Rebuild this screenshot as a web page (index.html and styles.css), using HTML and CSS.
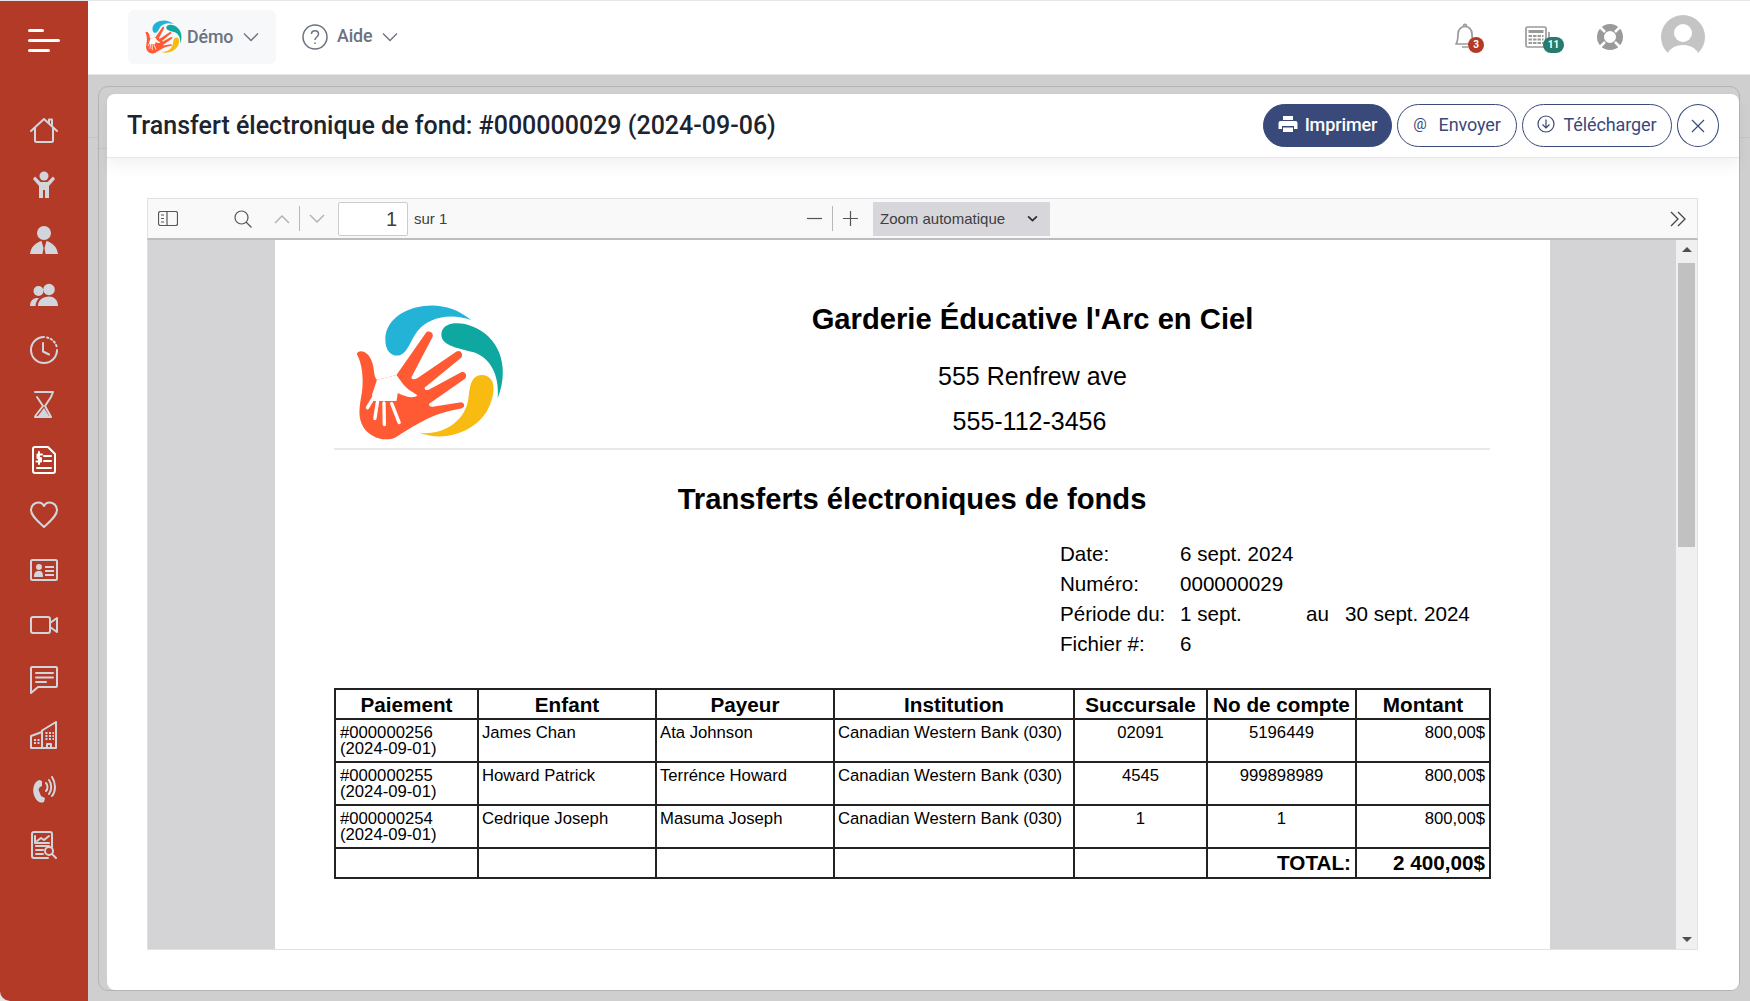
FILE: index.html
```html
<!DOCTYPE html>
<html lang="fr">
<head>
<meta charset="utf-8">
<title>Transfert électronique de fond</title>
<link rel="stylesheet" href="styles.css">
</head>
<body>
<svg class="defs" width="0" height="0" aria-hidden="true">
  <defs>
    <symbol id="logo" viewBox="105 75 445 405">
      <path fill="#23b3d6" d="M450 122C400 80 340 70 285 85C230 100 195 135 195 180C195 215 215 232 238 226C262 218 268 185 290 155C325 112 390 100 450 122Z"/>
      <path fill="#0fa8a0" d="M528 355C552 295 552 220 500 170C470 142 430 128 395 132C370 136 358 152 362 172C368 198 410 205 455 217C505 232 535 285 528 355Z"/>
      <path fill="#f8bb12" d="M295 456C365 482 450 462 495 395C515 360 522 320 510 300C498 282 470 278 455 298C442 318 445 345 438 372C420 430 360 465 295 456Z"/>
      <path fill="#ff5a33" d="M110 222C118 208 142 214 153 240C165 268 158 285 170 300L228 285L315 160C322 150 340 158 335 172L272 292C275 300 285 298 292 293L405 216C418 208 430 225 418 235L312 322C310 332 320 330 325 328L420 277C435 272 440 292 428 298L325 370C322 380 335 380 340 378L420 366C432 368 432 382 420 384C390 390 340 400 300 425C270 440 245 458 225 470C190 485 150 470 130 440C112 410 118 380 125 340C132 290 125 250 110 222Z"/>
      <path fill="#fff" d="M170 300L228 285L248 312C262 330 280 336 290 345C280 356 255 350 232 338L228 362L160 362L155 345Z"/>
      <path fill="none" stroke="#fff" stroke-width="10" stroke-linecap="round" d="M158 355L142 382M172 362L164 414M191 368L192 432M214 370L236 426"/>
    </symbol>
  </defs>
</svg>

<div class="app">
  <nav class="sidebar">
    <div class="burger"><span class="bar bar-s"></span><span class="bar bar-l"></span><span class="bar bar-m"></span></div>
    <ul class="menu">
      <li><svg class="ico" viewBox="0 0 28 28"><path class="ln" d="M1 15L14 3L27 15M5 12V24.500Q5 26 6.500 26H21.500Q23 26 23 24.500V12M19 7V3.500H22V10"/></svg></li>
      <li><svg class="ico" viewBox="0 0 28 28"><circle class="fl" cx="14" cy="5" r="4.500"/><path class="fl" d="M3 8L5 5.500L10.500 11H17.500L23 5.500L25 8L19 15V27H15V19H13V27H9V15Z"/></svg></li>
      <li><svg class="ico" viewBox="0 0 28 28"><circle class="fl" cx="14" cy="7" r="7"/><path class="fl" d="M0 28C1 21 5 17 11.500 15L13.500 22L12.500 28ZM28 28C27 21 23 17 16.500 15L14.500 22L15.500 28Z"/></svg></li>
      <li><svg class="ico" viewBox="0 0 28 28"><circle class="fl" cx="8.500" cy="10" r="5"/><circle class="fl" cx="19" cy="8.500" r="5.800"/><path class="fl" d="M0 25C0 19 4 16.500 9 17C7 19 5.500 22 5.500 25ZM8 25C8 19 13 15.500 19 15.500C25 15.500 28 20 28 25Z"/></svg></li>
      <li><svg class="ico" viewBox="0 0 28 28"><path class="ln" d="M14 1A13 13 0 1 0 27 14"/><path class="ln" stroke-dasharray="1.500 2.500" d="M17 1.500A13 13 0 0 1 27 12"/><path class="ln" d="M13 7V15.500L19 18.500"/></svg></li>
      <li><svg class="ico" viewBox="0 0 28 28"><path class="ln" d="M5 1H23L21 6L15 15L21 26H5L6 24L13 15L7 6"/><path class="fl" d="M8 25L14 17L19 25Z"/></svg></li>
      <li class="active"><svg class="ico" viewBox="0 0 28 28"><path class="ln" d="M5 1H18L25 8V25Q25 27 23 27H5Q3 27 3 25V3Q3 1 5 1Z"/><path class="ln" d="M14 10H21M14 15H21M7 22H21M9 6V18"/><path class="ln" d="M12 8.500H7.500V12H11V15.500H6.500"/></svg></li>
      <li><svg class="ico" viewBox="0 0 28 28"><path class="ln" d="M14 26C8 20 1 15 1 9C1 4 5 1.500 8.500 1.500C11 1.500 13 3 14 5C15 3 17 1.500 19.500 1.500C23 1.500 27 4 27 9C27 15 20 20 14 26Z"/></svg></li>
      <li><svg class="ico" viewBox="0 0 28 28"><rect class="ln" x="1" y="4" width="26" height="20" rx="1.500"/><circle class="fl" cx="9" cy="11" r="3"/><path class="fl" d="M4 21C4 16 6 15 9 15C12 15 13 16 13 21ZM15 10H24V12H15ZM15 14H24V16H15ZM15 18H24V20H15Z"/></svg></li>
      <li><svg class="ico" viewBox="0 0 28 28"><rect class="ln" x="1" y="6" width="19" height="16" rx="2"/><path class="ln" d="M20 12L27 7V21L20 16"/></svg></li>
      <li><svg class="ico" viewBox="0 0 28 28"><path class="ln" d="M2 1H26Q27 1 27 2V20Q27 21 26 21H8L1 27V2Q1 1 2 1Z"/><path class="ln" d="M6 7H23M6 11.500H23M6 16H16"/></svg></li>
      <li><svg class="ico" viewBox="0 0 28 28"><path class="ln" d="M12 27V9.500L26 1V27H1V15L12 11M17 27V23H21V27"/><path class="dots" d="M15.500 12H24M15.500 15H24M15.500 18H24M4 19H10M4 22H10"/></svg></li>
      <li><svg class="ico" viewBox="0 0 28 28"><path class="fl" d="M9 4L12 5L12 10C9 11 8 13 9 15L11 20L15 22L14 26C10 28 6 25 4 19C2 13 4 6 9 4Z"/><path class="ln" d="M16 7C18 9 18 13 16 15M19 4C22 8 22 14 19 18M22 1C26 7 26 15 22 20"/></svg></li>
      <li><svg class="ico" viewBox="0 0 28 28"><path class="ln" d="M22 16V3Q22 1 20 1H4Q2 1 2 3V25Q2 27 4 27H18"/><path class="ln" d="M5 5V12H19M7 10L11 7L14 9L19 5M6 15H19M6 19H13M6 23H13"/><circle class="ln" cx="19" cy="20" r="4"/><path class="ln" d="M22 23L26 27"/></svg></li>
    </ul>
  </nav>

  <div class="main">
    <header class="topbar">
      <div class="brand">
        <svg class="brand-logo" viewBox="0 0 37 34"><use href="#logo"/></svg>
        <span class="top-label">Démo</span>
        <svg class="caret" viewBox="0 0 16 10"><path d="M1 1.500L8 8.500L15 1.500"/></svg>
      </div>
      <div class="help">
        <svg class="help-ico" viewBox="0 0 26 26"><circle cx="13" cy="13" r="12"/><path d="M9.500 10C9.500 5.500 16.500 5.500 16.500 10C16.500 13 13 13 13 16"/><path d="M13 18.500V20"/></svg>
        <span class="top-label">Aide</span>
        <svg class="caret" viewBox="0 0 16 10"><path d="M1 1.500L8 8.500L15 1.500"/></svg>
      </div>
      <div class="top-icons">
        <div class="ti ti-bell">
          <svg viewBox="0 0 22 26"><path class="tln" d="M2 21C4 18 4 15 4 11C4 6.500 7 3.500 11 3.500C15 3.500 18 6.500 18 11C18 15 18 18 20 21ZM9.500 3.500C9.500 0.500 12.500 0.500 12.500 3.500M8 24H14"/></svg>
          <span class="badge badge-red">3</span>
        </div>
        <div class="ti ti-cal">
          <svg viewBox="0 0 26 22"><rect class="tln" x="1" y="1" width="20" height="20" rx="1.500"/><path class="tfl" d="M3.500 4H18.500V7H3.500Z"/><path class="tdots" d="M3.500 10H18.500M3.500 13.500H18.500M3.500 17H18.500"/><path class="tln" d="M24 6V18"/></svg>
          <span class="badge badge-green">11</span>
        </div>
        <div class="ti ti-ring">
          <svg viewBox="0 0 26 26"><circle cx="13" cy="13" r="9.500" class="ring-a"/><path class="ring-b" d="M8 8L3 3M18 8L23 3M8 18L3 23M18 18L23 23"/></svg>
        </div>
        <div class="avatar">
          <svg viewBox="0 0 44 44"><circle cx="22" cy="22" r="22" fill="#c4c4c4"/><circle cx="22" cy="18" r="9" fill="#fff"/><path fill="#fff" d="M5 44C6 35 13 30 22 30C31 30 38 35 39 44Z"/></svg>
        </div>
      </div>
    </header>

    <main class="content">
      <div class="outer">
        <section class="card">
          <div class="card-head">
            <h1 class="card-title">Transfert électronique de fond: #000000029 (2024-09-06)</h1>
            <div class="actions">
              <button class="btn btn-fill"><svg class="bi" viewBox="0 0 20 18"><path fill="#fff" d="M5 1H15V5H5ZM2.500 6H17.500Q19.500 6 19.500 8V14H16V11H4V14H0.500V8Q0.500 6 2.500 6ZM5 12.500H15V17H5Z"/></svg>Imprimer</button>
              <button class="btn btn-line"><span class="at">@</span>Envoyer</button>
              <button class="btn btn-line btn-dl"><svg class="bi bi-dl" viewBox="0 0 18 18"><circle cx="9" cy="9" r="8"/><path d="M9 4.500V13M5.500 9.500L9 13L12.500 9.500"/></svg>Télécharger</button>
              <button class="btn-close"><svg viewBox="0 0 16 16"><path d="M2 2L14 14M14 2L2 14"/></svg></button>
            </div>
          </div>

          <div class="card-body">
            <div class="pdf-toolbar">
              <svg class="tb-ico tb-side" viewBox="0 0 20 15"><rect x="0.500" y="0.500" width="19" height="14" rx="2"/><path d="M9 0.500V14.500M3 4H6M3 7.500H6M3 11H6"/></svg>
              <svg class="tb-ico tb-search" viewBox="0 0 18 18"><circle cx="7.500" cy="7.500" r="6.500"/><path d="M12 12L17.500 17.500"/></svg>
              <svg class="tb-ico tb-chev tb-up" viewBox="0 0 16 10"><path d="M1 9L8 2L15 9"/></svg>
              <span class="tb-div"></span>
              <svg class="tb-ico tb-chev tb-down" viewBox="0 0 16 10"><path d="M1 1L8 8L15 1"/></svg>
              <span class="page-input">1</span>
              <span class="page-of">sur 1</span>
              <svg class="tb-ico tb-minus" viewBox="0 0 15 15"><path d="M0 7.500H15"/></svg>
              <span class="tb-div tb-div2"></span>
              <svg class="tb-ico tb-plus" viewBox="0 0 15 15"><path d="M0 7.500H15M7.500 0V15"/></svg>
              <div class="zoom-select"><span>Zoom automatique</span><svg viewBox="0 0 10 6"><path d="M1 1L5 5L9 1"/></svg></div>
              <svg class="tb-ico tb-more" viewBox="0 0 16 16"><path d="M1 1L8 8L1 15M8 1L15 8L8 15"/></svg>
            </div>

            <div class="viewer">
              <div class="pages">
                <article class="page">
                  <div class="letterhead">
                    <svg class="doc-logo" viewBox="0 0 150 137"><use href="#logo"/></svg>
                    <div class="org">
                      <div class="org-name">Garderie Éducative l'Arc en Ciel</div>
                      <div class="org-line">555 Renfrew ave</div>
                      <div class="org-line org-tel">555-112-3456</div>
                    </div>
                  </div>
                  <div class="rule"></div>
                  <h2 class="doc-title">Transferts électroniques de fonds</h2>
                  <div class="info">
                    <span>Date:</span><span class="wide">6 sept. 2024</span>
                    <span>Numéro:</span><span class="wide">000000029</span>
                    <span>Période du:</span><span>1 sept.</span><span>au</span><span>30 sept. 2024</span>
                    <span>Fichier #:</span><span class="wide">6</span>
                  </div>
                  <table class="tx">
                    <colgroup><col class="c1"><col class="c2"><col class="c3"><col class="c4"><col class="c5"><col class="c6"><col class="c7"></colgroup>
                    <thead>
                      <tr><th>Paiement</th><th>Enfant</th><th>Payeur</th><th>Institution</th><th>Succursale</th><th>No de compte</th><th>Montant</th></tr>
                    </thead>
                    <tbody>
                      <tr class="r43"><td>#000000256<br>(2024-09-01)</td><td>James Chan</td><td>Ata Johnson</td><td>Canadian Western Bank (030)</td><td class="ctr">02091</td><td class="ctr">5196449</td><td class="rgt">800,00$</td></tr>
                      <tr class="r43"><td>#000000255<br>(2024-09-01)</td><td>Howard Patrick</td><td>Terrénce Howard</td><td>Canadian Western Bank (030)</td><td class="ctr">4545</td><td class="ctr">999898989</td><td class="rgt">800,00$</td></tr>
                      <tr class="r43"><td>#000000254<br>(2024-09-01)</td><td>Cedrique Joseph</td><td>Masuma Joseph</td><td>Canadian Western Bank (030)</td><td class="ctr">1</td><td class="ctr">1</td><td class="rgt">800,00$</td></tr>
                      <tr class="total"><td></td><td></td><td></td><td></td><td></td><td class="rgt">TOTAL:</td><td class="rgt">2 400,00$</td></tr>
                    </tbody>
                  </table>
                </article>
              </div>
              <div class="scroll">
                <span class="arrow arrow-up"></span>
                <span class="thumb"></span>
                <span class="arrow arrow-down"></span>
              </div>
            </div>
          </div>
        </section>
      </div>
    </main>
  </div>
</div>
</body>
</html>
```

FILE: styles.css
```css
* { box-sizing: border-box; }
html, body { margin: 0; padding: 0; }
body {
  width: 1750px;
  height: 1001px;
  overflow: hidden;
  background: #e6e6e6;
  font-family: Roboto, "Liberation Sans", sans-serif;
}
.defs { display: block; height: 0; }
.app { display: flex; height: 1000px; margin-top: 1px; }

/* Sidebar */
.sidebar {
  width: 88px;
  flex: none;
  background: #b33a26;
  border-bottom-left-radius: 10px;
  color: #d2d5dc;
}
.burger { display: flex; flex-direction: column; gap: 7px; padding: 28px 0 0 28px; height: 101px; }
.bar { display: block; height: 3px; background: #fff; border-radius: 2px; }
.bar-s { width: 16px; }
.bar-l { width: 32px; }
.bar-m { width: 22px; }
.menu { list-style: none; margin: 0; padding: 0; }
.menu li { height: 55px; display: flex; align-items: center; justify-content: center; }
.menu .active { color: #fff; }
.ico { width: 28px; height: 28px; display: block; }
.ln { fill: none; stroke: currentColor; stroke-width: 2; stroke-linecap: round; stroke-linejoin: round; }
.fl { fill: currentColor; }
.dots { fill: none; stroke: currentColor; stroke-width: 2; stroke-dasharray: 2 1.500; }

/* Main */
.main { flex: 1; min-width: 0; display: flex; flex-direction: column; background: #cfcfcf; }
.topbar {
  height: 74px;
  flex: none;
  background: #fff;
  border-bottom: 1px solid #e6e6e6;
  display: flex;
  align-items: center;
  padding-left: 40px;
  color: #6b7280;
}
.brand {
  width: 148px;
  height: 54px;
  margin-top: -1px;
  background: #f7f8fa;
  border-radius: 6px;
  display: flex;
  align-items: center;
  padding-left: 17px;
}
.brand-logo { width: 37px; height: 34px; margin-right: 5px; }
.top-label { font-size: 17.800px; font-weight: 500; letter-spacing: -0.1px; margin-bottom: 2px; }
.caret { width: 16px; height: 10px; margin-left: 10px; fill: none; stroke: #6b7280; stroke-width: 1.300; }
.help { display: flex; align-items: center; margin-left: 26px; margin-top: -2px; }
.help-ico { width: 26px; height: 26px; margin-right: 9px; fill: none; stroke: #6b7280; stroke-width: 1.500; }
.top-icons { margin-left: auto; display: flex; align-items: center; padding-right: 45px; }
.ti { position: relative; display: flex; margin-top: -2px; }
.ti svg { display: block; }
.ti-bell { margin-top: -4px; }
.ti-bell svg { width: 22px; height: 26px; }
.ti-cal { margin-left: 49px; }
.ti-cal svg { width: 26px; height: 22px; }
.ti-ring { margin-left: 46px; }
.ti-ring svg { width: 26px; height: 26px; }
.tln { fill: none; stroke: #9a9a9a; stroke-width: 1.700; stroke-linejoin: round; }
.tfl { fill: #9a9a9a; }
.tdots { fill: none; stroke: #9a9a9a; stroke-width: 2; stroke-dasharray: 3.500 1; }
.ring-a { fill: none; stroke: #9a9a9a; stroke-width: 7; }
.ring-b { stroke: #fff; stroke-width: 2.500; }
.badge {
  position: absolute;
  height: 16px;
  border-radius: 8px;
  color: #fff;
  font-size: 10px;
  font-weight: 700;
  line-height: 16px;
  text-align: center;
}
.badge-red { background: #b33a26; width: 16px; left: 14px; top: 14px; }
.badge-green { background: #267a6e; width: 21px; left: 18px; top: 11px; }
.avatar { margin-left: 38px; width: 44px; height: 44px; margin-top: -1px; }
.avatar svg { display: block; width: 44px; height: 44px; }

/* Content */
.content {
  flex: 1;
  min-height: 0;
  padding: 11px 10px 10px 10px;
  background: linear-gradient(#c4c4c4, #c4c4c4) 0 62px / 100% 1px no-repeat #cfcfcf;
}
.outer {
  height: 100%;
  padding: 7px 0 0 8px;
  background: linear-gradient(#c4c4c4, #c4c4c4) 0 61px / 8px 1px no-repeat #cfcfcf;
  border: 1px solid #b4b4b4;
  border-radius: 10px;
}
.card {
  height: 100%;
  display: flex;
  flex-direction: column;
  background: #fff;
  border-radius: 8px;
}
.card-head {
  height: 64px;
  flex: none;
  display: flex;
  align-items: center;
  justify-content: space-between;
  padding: 0 20px 0 20px;
  border-bottom: 1px solid #e6e6e6;
  box-shadow: 0 8px 14px rgba(0, 0, 0, 0.05);
}
.card-title { margin: 0; font-size: 25px; line-height: 30px; font-weight: 500; color: #1c2430; }
.actions { display: flex; align-items: center; gap: 5px; }
.btn {
  height: 43px;
  border-radius: 22px;
  font-family: inherit;
  font-size: 18px;
  display: flex;
  align-items: center;
  justify-content: center;
  padding: 0 0 3px;
  letter-spacing: -0.1px;
}
.btn-fill { width: 129px; background: #38497a; border: 1px solid #38497a; color: #fff; font-weight: 500; }
.btn-line { width: 120px; background: #fff; border: 1px solid #38497a; color: #38497a; }
.btn-dl { width: 150px; }
.bi { width: 20px; height: 18px; margin-right: 7px; }
.bi-dl { width: 18px; height: 18px; margin-right: 8px; fill: none; stroke: #38497a; stroke-width: 1.200; }
.at { font-size: 15px; margin-right: 12px; }
.btn-close {
  width: 42px;
  height: 43px;
  border-radius: 50%;
  background: #fff;
  border: 1px solid #38497a;
  padding: 0;
  display: flex;
  align-items: center;
  justify-content: center;
}
.btn-close svg { width: 16px; height: 16px; fill: none; stroke: #38497a; stroke-width: 1.200; }

.card-body { flex: 1; min-height: 0; padding: 40px 41px 40px 40px; display: flex; flex-direction: column; }

/* PDF toolbar */
.pdf-toolbar {
  height: 42px;
  flex: none;
  display: flex;
  align-items: center;
  background: #f9f9fa;
  border: 1px solid #e0e0e6;
  border-bottom: 2px solid #bdbdbd;
  font-family: "Liberation Sans", sans-serif;
  color: #3d3d42;
}
.tb-ico { display: block; fill: none; stroke: #55555a; stroke-width: 1.200; flex: none; }
.tb-side { width: 20px; height: 15px; margin-left: 10px; }
.tb-search { width: 18px; height: 18px; margin-left: 56px; }
.tb-chev { width: 16px; height: 10px; stroke: #b4b4b8; stroke-width: 1.500; }
.tb-up { margin-left: 22px; }
.tb-div { width: 1px; height: 25px; background: #b8b8b8; margin: 0 9px; flex: none; }
.tb-down { margin-left: 0; }
.page-input {
  width: 70px;
  height: 34px;
  margin-left: 13px;
  background: #fff;
  border: 1px solid #ccc;
  border-radius: 2px;
  text-align: right;
  padding-right: 10px;
  font-size: 20px;
  line-height: 33px;
}
.page-of { font-size: 15px; margin-left: 6px; width: 393px; }
.tb-minus, .tb-plus { width: 15px; height: 15px; stroke: #55555a; }
.tb-div2 { margin: 0 10px; }
.zoom-select {
  width: 177px;
  height: 34px;
  margin-left: 15px;
  background: #d7d7db;
  display: flex;
  align-items: center;
  justify-content: space-between;
  padding: 0 12px 0 7px;
  font-size: 15px;
}
.zoom-select svg { width: 11px; height: 7px; fill: none; stroke: #2a2a2e; stroke-width: 1.500; }
.tb-more { width: 16px; height: 16px; margin-left: auto; margin-right: 11px; stroke: #444; stroke-width: 1.300; }

/* Viewer */
.viewer {
  flex: 1;
  min-height: 0;
  display: flex;
  border: 1px solid #e0e0e6;
  border-top: 0;
}
.pages { flex: 1; min-width: 0; background: #d4d4d7; padding-left: 127px; overflow: hidden; }
.page {
  width: 1275px;
  height: 100%;
  background: #fff;
  padding: 0 60px 0 59px;
  font-family: "Liberation Sans", sans-serif;
  color: #000;
  overflow: hidden;
}
.letterhead { display: flex; padding-top: 57px; height: 208px; }
.doc-logo { width: 150px; height: 137px; margin: 7px 0 0 21px; flex: none; }
.org { flex: 1; margin-left: 70px; text-align: center; font-size: 25px; line-height: 44px; }
.org-name { font-size: 29.200px; font-weight: 700; margin-bottom: 13px; }
.org-tel { padding-right: 6px; margin-top: 1px; }
.rule { height: 2px; background: #e8e8e8; }
.doc-title { margin: 27px 0 0; font-size: 29.200px; line-height: 44px; font-weight: 700; text-align: center; }
.info {
  display: grid;
  grid-template-columns: 120px 126px 39px auto;
  grid-auto-rows: 30px;
  margin: 18px 0 0 726px;
  font-size: 20.600px;
  line-height: 30px;
}
.info .wide { grid-column: span 3; }
.tx {
  margin-top: 29px;
  width: 1155px;
  table-layout: fixed;
  border-collapse: collapse;
  font-size: 16.700px;
  line-height: 16px;
}
.c1 { width: 143px; }
.c2 { width: 178px; }
.c3 { width: 178px; }
.c4 { width: 240px; }
.c5 { width: 133px; }
.c6 { width: 149px; }
.c7 { width: 134px; }
.tx th, .tx td { border: 2px solid #222; padding: 5px 4px 0 4px; vertical-align: top; }
.tx td + td { padding-left: 3px; }
.tx th { height: 30px; padding: 1px 2px 0; font-size: 20.700px; font-weight: 700; line-height: 26px; vertical-align: middle; text-align: center; white-space: nowrap; }
.r43 td { height: 43px; }
.tx .total td { height: 30px; padding: 0 4px; font-size: 20.700px; font-weight: 700; line-height: 28px; vertical-align: middle; }
.tx .ctr { text-align: center; padding-left: 4px; }
.tx .rgt { text-align: right; }

/* Scrollbar */
.scroll {
  width: 21px;
  flex: none;
  background: #f0f0f0;
  display: flex;
  flex-direction: column;
  align-items: center;
}
.arrow { width: 0; height: 0; border-left: 5px solid transparent; border-right: 5px solid transparent; flex: none; }
.arrow-up { border-bottom: 5px solid #505050; margin-top: 7px; }
.arrow-down { border-top: 5px solid #505050; margin-top: auto; margin-bottom: 7px; }
.thumb { width: 17px; height: 284px; background: #c1c1c1; margin-top: 11px; flex: none; }
```
